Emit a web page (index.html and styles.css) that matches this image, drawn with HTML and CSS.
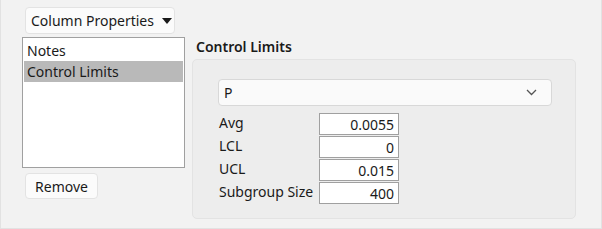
FILE: index.html
```html
<!DOCTYPE html>
<html lang="en">
<head>
  <meta charset="UTF-8">
  <title>Column Properties</title>
  <link rel="stylesheet" href="styles.css">
</head>
<body>
  <div class="window">
    <div class="toolbar">
      <button class="btn btn-menu">Column Properties <span class="caret"></span></button>
    </div>
    <div class="main">
      <div class="side">
        <ul class="list">
          <li>Notes</li>
          <li class="selected">Control Limits</li>
        </ul>
        <button class="btn btn-remove">Remove</button>
      </div>
      <div class="content">
        <div class="title">Control Limits</div>
        <div class="panel">
          <div class="select">
            <span>P</span>
            <svg width="11" height="7" viewBox="0 0 11 7"><path d="M1 1l4.5 4.5L10 1" fill="none" stroke="#555" stroke-width="1.3"/></svg>
          </div>
          <div class="fields">
            <label>Avg</label><input value="0.0055">
            <label>LCL</label><input value="0">
            <label>UCL</label><input value="0.015">
            <label>Subgroup Size</label><input value="400">
          </div>
        </div>
      </div>
    </div>
  </div>
</body>
</html>
```

FILE: styles.css
```css
* { box-sizing: border-box; }
body {
  margin: 0;
  background: #f2f2f2;
  font-family: "Noto Sans", "Open Sans", sans-serif;
  font-size: 14px;
  color: #1a1a1a;
}

.window {
  width: 602px;
  height: 229px;
  border: 1px solid #e2e2e2;
  border-top: none;
  padding: 7px 0 0 21px;
}

/* Buttons */
.btn {
  font: inherit;
  color: #1a1a1a;
  background: #fbfbfb;
  border: 1px solid #e3e3e3;
  border-radius: 4px;
  padding: 0 6px;
  cursor: pointer;
  white-space: nowrap;
}
.btn-menu {
  margin-left: 3px;
  width: 150px;
  height: 27px;
  display: flex;
  align-items: center;
  gap: 8px;
  padding-left: 5px;
}
.caret {
  flex-shrink: 0;
  width: 0;
  height: 0;
  border-left: 5px solid transparent;
  border-right: 5px solid transparent;
  border-top: 6px solid #1a1a1a;
}
.btn-remove {
  margin: 5px 0 0 3px;
  width: 73px;
  height: 26px;
}

.main {
  display: flex;
  gap: 7px;
  margin-top: 3px;
}

/* Left list */
.list {
  list-style: none;
  margin: 0;
  padding: 2px 1px;
  width: 163px;
  height: 131px;
  background: #fff;
  border: 1px solid #a0a0a0;
}
.list li {
  height: 21px;
  line-height: 21px;
  padding-left: 3px;
}
.list li.selected { background: #b9b9b9; }

/* Right side */
.content { width: 384px; }
.title {
  font-weight: 600;
  height: 22px;
  line-height: 20px;
  padding-left: 4px;
}
.panel {
  background: #ededed;
  border: 1px solid #e3e3e3;
  border-radius: 5px;
  height: 160px;
  padding: 19px 23px 0 25px;
}
.select {
  height: 27px;
  background: #fafafa;
  border: 1px solid #d8d8d8;
  border-radius: 4px;
  display: flex;
  align-items: center;
  justify-content: space-between;
  padding: 0 14px 0 5px;
}
.fields {
  display: grid;
  grid-template-columns: 101px 80px;
  row-gap: 1px;
  margin-top: 7px;
}
.fields label {
  line-height: 20px;
  padding-left: 1px;
}
.fields input {
  font: inherit;
  color: #1a1a1a;
  width: 80px;
  height: 22px;
  border: 1px solid #a0a0a0;
  background: #fff;
  text-align: right;
  padding: 0 4px;
  outline: none;
}
```
